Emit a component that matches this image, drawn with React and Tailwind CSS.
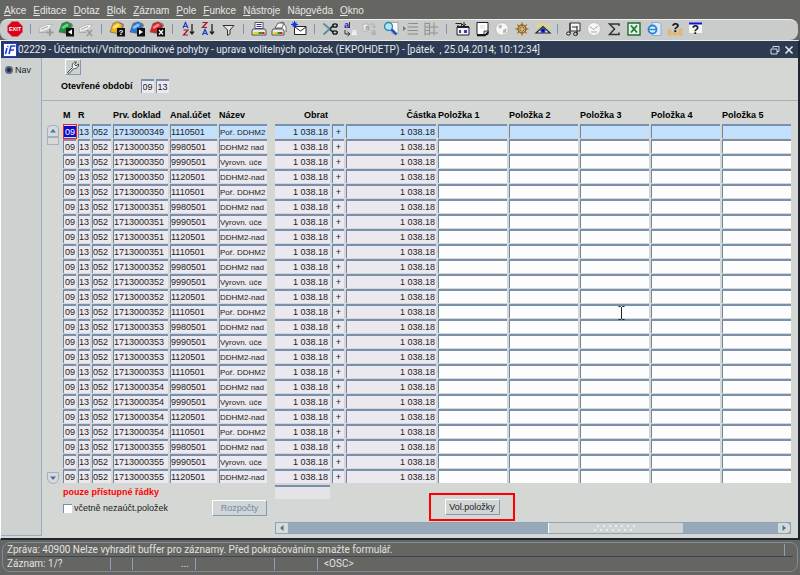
import { useState } from "react";
import clsx from "clsx";

const MENU = [
  ["", "A", "kce"],
  ["", "E", "ditace"],
  ["", "D", "otaz"],
  ["", "B", "lok"],
  ["", "Z", "áznam"],
  ["", "P", "ole"],
  ["", "F", "unkce"],
  ["", "N", "ástroje"],
  ["Náp", "o", "věda"],
  ["", "O", "kno"],
];

const ACCOUNTS = [
  ["9980501", "DDHM2 nad"],
  ["9990501", "Vyrovn. úče"],
  ["1120501", "DDHM2-nad"],
  ["1110501", "Poř. DDHM2"],
];

const ROWS = [{ doklad: "1713000349", ucet: "1110501", nazev: "Poř. DDHM2" }];
for (let i = 0; i < 23; i++) {
  const [ucet, nazev] = ACCOUNTS[i % 4];
  ROWS.push({ doklad: String(1713000350 + Math.floor(i / 4)), ucet, nazev });
}

const POLOZKY = [1, 2, 3, 4, 5];

const Folder = ({ color, light, children }) => (
  <>
    <path d="M1 11 4 2.500 9 .800 14 3 11 13Z" fill={color} stroke="#555" strokeWidth=".6" />
    <path d="M3.500 6 9 2.500 11 4.500 5 8Z" fill={light} />
    <path d="M10.500 2 14.500 4 13.500 7" fill="none" stroke="#777" />
    <rect x="8" y="7" width="8" height="8.500" fill="#111" />
    {children}
  </>
);

const Printer = () => (
  <>
    <path d="M4 1.500h8v6H4z" fill="#fff" stroke="#333" strokeWidth=".8" />
    <path d="M5.500 3.500h5M5.500 5.500h5" stroke="#2233bb" />
    <path d="M2 8h12l1 2v4H1v-4z" fill="#e8e8e8" stroke="#333" strokeWidth=".8" />
    <path d="M2.500 12h5" stroke="#e8d800" strokeWidth="2" />
    <path d="M7.500 12h3" stroke="#1a9a30" strokeWidth="2" />
    <path d="M10.500 12h3" stroke="#d22" strokeWidth="2" />
  </>
);

const GreySheet = () => (
  <>
    <path d="M1 7 9 3.500h5.500l-4 5-8.500 3z" fill="#f0f0f0" stroke="#b0b0b0" strokeWidth=".8" />
    <path d="M1 11.500h7.500M3 8.500l7-3" stroke="#aaa" strokeWidth="1.200" />
  </>
);

const iconText = { fontFamily: "Liberation Sans", fontWeight: 700 };

const ICONS = {
  "Konec": (
    <>
      <path d="M5 .500h6L15.500 5v6L11 15.500H5L.500 11V5z" fill="#d9001b" stroke="#f06070" strokeWidth=".6" />
      <text x="8" y="10" fontSize="5.500" fill="#fff" textAnchor="middle" style={iconText}>EXIT</text>
    </>
  ),
  "Vložit záznam": (
    <>
      <GreySheet />
      <path d="M12 8v7M8.500 11.500h7" stroke="#999" strokeWidth="1.800" />
    </>
  ),
  "Uložit": (
    <Folder color="#18943c" light="#6fd08a">
      <path d="M14 8.500v5L10 11z" fill="#fff" />
    </Folder>
  ),
  "Smazat záznam": (
    <>
      <GreySheet />
      <path d="m9 9 5 6m0-6-5 6" stroke="#999" strokeWidth="1.500" />
    </>
  ),
  "Zadat dotaz": (
    <Folder color="#f0b414" light="#ffe680">
      <text x="12" y="14" fontSize="8" fill="#fff" textAnchor="middle" style={iconText}>?</text>
    </Folder>
  ),
  "Provést dotaz": (
    <Folder color="#2c78d8" light="#8cc4ff">
      <path d="M10 8.500v5l4-2.500z" fill="#fff" />
    </Folder>
  ),
  "Zrušit dotaz": (
    <Folder color="#d8232a" light="#ff8a80">
      <path d="m10 9 4 4.500m0-4.500-4 4.500" stroke="#fff" strokeWidth="1.300" />
    </Folder>
  ),
  "Třídit vzestupně": (
    <>
      <path d="m3 7 2.500-5.500L8 7M4 5.500h3" fill="none" stroke="#2438c0" strokeWidth="1.200" />
      <path d="M3.500 9H8l-4.500 5H8" fill="none" stroke="#a01828" strokeWidth="1.200" />
      <path d="M12 3v9m-2-1.500 2 2.500 2-2.500" fill="none" stroke="#222" strokeWidth="1.300" />
    </>
  ),
  "Třídit sestupně": (
    <>
      <path d="M2.500 1.500H7l-4.500 5H7" fill="none" stroke="#a01828" strokeWidth="1.200" />
      <path d="m2.500 14 2.500-5.500L7.500 14M3.500 12.500h3" fill="none" stroke="#2438c0" strokeWidth="1.200" />
      <path d="M12 3v9m-2-1.500 2 2.500 2-2.500" fill="none" stroke="#222" strokeWidth="1.300" />
    </>
  ),
  "Filtr": <path d="M3 4.500h11L10 9v4l-2.500 1.500V9z" fill="#e4e4e4" stroke="#333" strokeWidth="1" />,
  "Tisk": <Printer />,
  "Tisk sestavy": (
    <>
      <path d="m7 3 5-2 3 5v5" fill="#fff" stroke="#555" strokeWidth=".8" />
      <path d="m4 7 3-5h6l-2 5z" fill="#f4f4f4" stroke="#444" strokeWidth=".8" />
      <path d="M2 8h10l1 2v4H1v-4z" fill="#e8e8e8" stroke="#333" strokeWidth=".8" />
      <path d="M2.500 12h4" stroke="#e8d800" strokeWidth="2" />
      <path d="M6.500 12h2.500" stroke="#1a9a30" strokeWidth="2" />
      <path d="M9 12h2.500" stroke="#d22" strokeWidth="2" />
    </>
  ),
  "Pošta": (
    <>
      <path d="M3.500 5.500h11.500v8H3.500z" fill="#fff" stroke="#222" />
      <path d="m4 6 5.500 4L15 6" fill="none" stroke="#222" />
      <path d="M3.500 0v7M0 3.500h7M1.500 1.500l4 4m0-4-4 4" stroke="#1538d8" strokeWidth="1.100" />
    </>
  ),
  "Vyjmout": (
    <>
      <path d="M1.500 2.500 11 11M1.500 13.500 11 5" stroke="#5b8f96" strokeWidth="1.800" />
      <path d="m8 8.500 3 2.500M8 7.500 11 5" stroke="#222" strokeWidth="1.500" />
      <ellipse cx="13" cy="4.500" rx="2.200" ry="1.600" fill="none" stroke="#111" strokeWidth="1.400" />
      <ellipse cx="13" cy="11.500" rx="2.200" ry="1.600" fill="none" stroke="#111" strokeWidth="1.400" />
    </>
  ),
  "Kopírovat": (
    <>
      <text x="2" y="7" fontSize="9" fill="#2020c8" style={iconText}>a</text>
      <path d="M3 9v4h4m-1.500-2L8 13l-2.500 2M7.500 1v6" fill="none" stroke="#333" />
      <text x="9.500" y="14" fontSize="9" fill="#fff" style={iconText}>a</text>
    </>
  ),
  "Vložit": (
    <>
      <path d="M1 3h5v7H1z" fill="#ededed" stroke="#b4b4b4" />
      <text x="3" y="9" fontSize="8" fill="#a4a4a4" style={iconText}>a</text>
      <path d="M7 3h5v3m-2-1 2 2 2-2" fill="none" stroke="#b0b0b0" />
      <text x="9" y="14" fontSize="9" fill="#aaa" style={iconText}>a</text>
    </>
  ),
  "Hledat": (
    <>
      <path d="M8 1.500h7v11H9z" fill="#f8f8f8" stroke="#999" strokeWidth=".8" />
      <circle cx="5.500" cy="5.500" r="4" fill="#aee6f4" stroke="#3a86a8" strokeWidth="1.300" />
      <path d="m8.500 8.500 5 5" stroke="#1f58b8" strokeWidth="2.600" />
    </>
  ),
  "Seznam": (
    <>
      <path d="M5 2.500h10M5 6h10M5 9.500h10M5 13h10" stroke="#8a8a8a" strokeWidth="1.200" />
      <path d="M0 5v5l3-2.500z" fill="#777" />
      <path d="M5 1v14" stroke="#bbb" />
    </>
  ),
  "Strom": (
    <path
      d="M2 1.500v13M6.500 1.500v13M11 1.500v13M2 2.500h4M2 6h4M2 9.500h4M2 13h4M7 6h8M7 12h8"
      stroke="#8f8f8f"
    />
  ),
  "Kalendář": (
    <>
      <path d="M1.500 2.500h6v4M4 4v3h8" fill="none" stroke="#222" />
      <path d="M3 6h12v8H3z" fill="#f2f2f2" stroke="#222" />
      <path d="M3 6h12" stroke="#222" strokeWidth="2" />
      <path d="M10 1v4m-2-2 2 2 2-2" fill="none" stroke="#222" />
      <path d="M5 9h2v3H5zM10 9h3v3h-3z" fill="#3344bb" />
    </>
  ),
  "Poznámka": (
    <>
      <path d="M3 1.500h11v12H3z" fill="#fff" stroke="#222" />
      <path d="M3 14.500h8l3.500-4" fill="none" stroke="#111" strokeWidth="1.500" />
      <path d="M10 13.500V10h4" fill="#ccc" stroke="#222" strokeWidth=".8" />
      <path d="M6 7h5M6 5h5" stroke="#ddd" />
    </>
  ),
  "Síť": (
    <>
      <circle cx="8" cy="8" r="6.300" fill="#f6f6f6" stroke="#bdbdbd" />
      <path d="m4 5 3-1.500L8 6 6 8zM9 9l3.500-1.500L12 11l-2.500 2z" fill="#b4b4b4" />
    </>
  ),
  "Navigátor": (
    <>
      <circle cx="8" cy="8" r="4" fill="none" stroke="#a06c14" strokeWidth="1.400" />
      <path d="M8 1.500v13M1.500 8h13M3 3.500l10 9M13 3.500l-10 9" stroke="#8a5a10" />
      <circle cx="8" cy="8" r="1.500" fill="#e8c060" />
    </>
  ),
  "Náhled": (
    <>
      <path d="m1 4 3 3M8 1.500V5m7-1-3 3M4 2.500l2 3m6-3-2 3" stroke="#f0e040" strokeWidth="1.200" />
      <path d="M1 12 8 5.500 15 12z" fill="#f5f0e0" stroke="#222" strokeWidth="1.200" />
      <circle cx="8" cy="9.500" r="2.600" fill="#1c38e0" />
      <circle cx="8" cy="9.500" r="1" fill="#001" />
    </>
  ),
  "Média": (
    <>
      <path d="M5 2h10v8H5z" fill="#f4f4f4" stroke="#333" />
      <path d="M5 2v10M12 5v8M7 6h5" stroke="#333" strokeWidth="1.200" />
      <ellipse cx="3.500" cy="12.500" rx="2" ry="1.600" fill="none" stroke="#222" />
      <ellipse cx="10.500" cy="13" rx="2" ry="1.600" fill="none" stroke="#222" />
    </>
  ),
  "Čas": (
    <>
      <circle cx="8" cy="8" r="6.500" fill="#f6f6f6" stroke="#c2c2c2" />
      <path d="m4 5.500 3.500 3L12 5M5 11h6" fill="none" stroke="#aaa" />
    </>
  ),
  "Součet": <path d="M13 5V3H3.500l5 5-5 5.500H13V11.500" fill="none" stroke="#333" strokeWidth="1.500" />,
  "Excel": (
    <>
      <path d="M2 2h12v12H2z" fill="#e6f2e6" stroke="#1e6e34" strokeWidth="1.400" />
      <path d="m5 4.500 6 7m0-7-6 7" stroke="#1e7a38" strokeWidth="1.800" />
    </>
  ),
  "Prohlížeč": (
    <>
      <path d="M6 1.500h7l2 2v11H6z" fill="#dfe9fa" stroke="#8a9cc8" strokeWidth=".8" />
      <circle cx="6.500" cy="8.500" r="4" fill="#d4eeff" stroke="#2b86d0" strokeWidth="1.800" />
      <path d="M3 8.500h7" stroke="#2b86d0" strokeWidth="1.400" />
    </>
  ),
  "Nápověda k poli": (
    <>
      <path d="M1 9h3v5H1zM6 11h4v3H6zM12 8h3v6h-3z" fill="#f0b860" stroke="#e0a850" strokeWidth=".5" />
      <text x="8.500" y="11" fontSize="13" fill="#111" textAnchor="middle" style={iconText}>?</text>
    </>
  ),
  "Nápověda": (
    <>
      <path d="M2 2h13v10H2z" fill="#f4f4f4" />
      <path d="M2 2.500h13" stroke="#1212e0" strokeWidth="2" />
      <text x="8.500" y="13" fontSize="12" fill="#111" textAnchor="middle" style={iconText}>?</text>
    </>
  ),
};

const TOOLBAR = [
  "Konec", "|", "Vložit záznam", "Uložit", "Smazat záznam", "|",
  "Zadat dotaz", "Provést dotaz", "Zrušit dotaz", "|",
  "Třídit vzestupně", "Třídit sestupně", "Filtr", "|",
  "Tisk", "Tisk sestavy", "Pošta", "|",
  "Vyjmout", "Kopírovat", "Vložit", "Hledat", "Seznam", "Strom", "|",
  "Kalendář", "Poznámka", "Síť", "Navigátor", "Náhled", "|",
  "Média", "Čas", "Součet", "Excel", "Prohlížeč", "Nápověda k poli", "Nápověda",
];

const MenuBar = () => (
  <nav className="flex h-[19px] items-center gap-[7px] px-1 pt-px text-[10px] text-[#e6e6e6]">
    {MENU.map(([pre, key, post]) => (
      <button key={pre + key + post} type="button">
        {pre}
        <span className="underline">{key}</span>
        {post}
      </button>
    ))}
  </nav>
);

const Toolbar = () => (
  <div className="mr-0.5 h-[21px] rounded-lg border-t border-[#eef0ee] bg-[#c9cccb] pb-0.5 pl-1.5">
    <div className="flex h-full w-[698px] items-center justify-between">
      {TOOLBAR.map((name, i) =>
        name === "|" ? (
          <span key={i} className="flex w-2 justify-center">
            <span className="h-2.5 w-px bg-[#7d94b3]" />
          </span>
        ) : (
          <button key={i} type="button" aria-label={name} className="flex w-[18px] justify-center">
            <svg viewBox="0 0 16 16" className="size-4 overflow-visible">{ICONS[name]}</svg>
          </button>
        )
      )}
    </div>
  </div>
);

const TitleBar = () => (
  <header className="flex h-[17px] items-center bg-[#2c3a52] pl-0.5 pr-1 text-[#e4e8ee]">
    <svg viewBox="0 0 14 14" className="mr-px size-3.5">
      <rect x=".500" y=".500" width="13" height="13" fill="#fff" stroke="#1a3be0" />
      <path d="M4 5 2.500 11M5 3l-.3 1M6 11 8 3h4.500M7 7h4" fill="none" stroke="#1a3be0" strokeWidth="1.600" />
    </svg>
    <h1 className="grow whitespace-pre font-[Roboto,sans-serif] text-[10px]">
      02229 - Účetnictví/Vnitropodnikové pohyby - uprava volitelných položek (EKPOHDETP) - [pátek  , 25.04.2014; 10:12:34]
    </h1>
    <button type="button" aria-label="Obnovit" className="mr-1">
      <svg viewBox="0 0 10 10" className="size-2.5">
        <path d="M3 3V1.500h6v5H7M1 4h6v5H1z" fill="none" stroke="#d8dce4" />
      </svg>
    </button>
    <button type="button" aria-label="Zavřít">
      <svg viewBox="0 0 10 10" className="size-2.5">
        <path d="m1.500 1.500 7 7m0-7-7 7" stroke="#e8ecf2" strokeWidth="1.500" />
      </svg>
    </button>
  </header>
);

const Field = ({ label, value = "", className }) => (
  <input
    type="text"
    aria-label={label}
    defaultValue={value}
    className={clsx(
      "block h-3.5 w-full border-t-2 border-l border-t-[#7890ae] border-l-[#6c86a8] leading-3 text-[#222] outline-none",
      className
    )}
  />
);

const th = "h-[18px] p-0 text-left align-middle font-bold whitespace-nowrap";
const td = "h-[15px] p-0 pr-0.5 align-top";

const RecordTable = () => (
  <table className="w-full table-fixed border-collapse text-[9px] leading-3">
    <colgroup>
      <col className="w-[15px]" />
      <col className="w-[14px]" />
      <col className="w-[21px]" />
      <col className="w-[57px]" />
      <col className="w-[49px]" />
      <col className="w-[50px]" />
      <col className="w-[6px]" />
      <col className="w-[57px]" />
      <col className="w-[14px]" />
      <col className="w-[92px]" />
      {POLOZKY.map((n) => (
        <col key={n} />
      ))}
    </colgroup>
    <thead>
      <tr>
        <th className={th}>M</th>
        <th className={th}>R</th>
        <th className={th}></th>
        <th className={th}>Prv. doklad</th>
        <th className={th}>Anal.účet</th>
        <th className={th}>Název</th>
        <th className={th}></th>
        <th className={clsx(th, "pr-1 text-right!")}>Obrat</th>
        <th className={th}></th>
        <th className={clsx(th, "pr-0.5 text-right!")}>Částka</th>
        {POLOZKY.map((n) => (
          <th key={n} className={th}>Položka {n}</th>
        ))}
      </tr>
    </thead>
    <tbody>
      {ROWS.map((row, i) => {
        const bg = i === 0 ? "bg-[#c3e0fd]" : "bg-[#ebe9ef]";
        return (
          <tr key={i}>
            <td className={td}>
              {i === 0 ? (
                <div className="-mr-px border border-[#f02020] bg-[#c3e0fd] py-px">
                  <input
                    type="text"
                    aria-label="M"
                    defaultValue="09"
                    className="block h-[11px] w-full bg-[#0a0ad0] pl-px leading-none text-white outline-none"
                  />
                </div>
              ) : (
                <Field label="M" value="09" className={clsx(bg, "pl-px")} />
              )}
            </td>
            <td className={td}><Field label="R" value="13" className={bg} /></td>
            <td className={td}><Field label="Kód" value="052" className={bg} /></td>
            <td className={td}><Field label="Prv. doklad" value={row.doklad} className={bg} /></td>
            <td className={td}><Field label="Anal.účet" value={row.ucet} className={bg} /></td>
            <td className={td}><Field label="Název" value={row.nazev} className={clsx(bg, "text-[8px]")} /></td>
            <td className={td}></td>
            <td className={td}>
              <Field label="Obrat" value="1 038.18" className={clsx(bg, "border-l-0 pr-0.5 text-right")} />
            </td>
            <td className={td}><Field label="Znaménko" value="+" className={clsx(bg, "text-center")} /></td>
            <td className={td}>
              <Field label="Částka" value="1 038.18" className={clsx(bg, "pr-px text-right")} />
            </td>
            {POLOZKY.map((n) => (
              <td key={n} className={td}>
                <Field label={`Položka ${n}`} className={i === 0 ? bg : "bg-[#fdfdfd]"} />
              </td>
            ))}
          </tr>
        );
      })}
    </tbody>
  </table>
);

const TextCursor = () => (
  <svg viewBox="0 0 7 14" className="pointer-events-none absolute top-[200px] left-[76%] h-3.5 w-[7px]">
    <path d="M.500 .500h2l1 1 1-1h2M3.500 1.500v11M.500 13.500h2l1-1 1 1h2" fill="none" stroke="#222" />
  </svg>
);

const ArrowButton = ({ label, d, className }) => (
  <button
    type="button"
    aria-label={label}
    className={clsx("flex items-center justify-center border border-[#9fb0c2] bg-[#d6dad9]", className)}
  >
    <svg viewBox="0 0 8 8" className="size-2">
      <path d={d} fill="#4f6f9a" />
    </svg>
  </button>
);

const HScroll = () => (
  <div className="flex h-3 border border-[#8ea3b8] bg-[#97a8b8]">
    <ArrowButton label="Posunout vlevo" d="M5.500 1v6L2 4z" className="w-3 border-0" />
    <div className="flex grow">
      <div className="w-[53%]" />
      <div className="flex w-[27.6%] items-center justify-center border-l border-white bg-[#ced3d2]">
        <svg viewBox="0 0 48 8" className="h-2 w-12">
          <path d="M5 2h42" stroke="#f4f4f4" strokeWidth="1.500" strokeDasharray="2 4" />
          <path d="M2 6h42" stroke="#f4f4f4" strokeWidth="1.500" strokeDasharray="2 4" />
        </svg>
      </div>
    </div>
    <ArrowButton label="Posunout vpravo" d="M2.500 1v6L6 4z" className="w-3 rounded-r border-0" />
  </div>
);

const formButton =
  "h-4 border border-t-white border-l-white border-r-[#8499b3] border-b-[#8499b3] bg-[#d0d5d5] leading-3";

const FormFooter = () => {
  const [nezauct, setNezauct] = useState(false);

  return (
    <div className="flex h-[38px] gap-1.5 pl-[21px] text-[9px] leading-3">
      <div className="w-[206px]">
        <p className="h-4 pt-0.5 font-bold text-[#ff0000]">pouze přístupné řádky</p>
        <div className="flex items-center justify-between pr-0.5">
          <label className="flex items-center gap-0.5 text-[#222]">
            <input
              type="checkbox"
              checked={nezauct}
              onChange={(e) => setNezauct(e.target.checked)}
              className="size-[9px] appearance-none border-t border-l border-[#7890ae] bg-white checked:bg-[#2c3a52]"
            />
            včetně nezaúčt.položek
          </label>
          <button type="button" disabled className={clsx(formButton, "w-[55px] text-[#7389a8]")}>
            Rozpočty
          </button>
        </div>
      </div>
      <div className="w-[55px] pt-px">
        <Field label="Obrat celkem" className="border-l-0 bg-[#e4e3e8]" />
      </div>
      <div className="mt-[9px] ml-[93px] flex h-7 w-[86px] items-center justify-center border-2 border-[#ff0000]">
        <button type="button" className={clsx(formButton, "w-[55px] text-[#222]")}>
          Vol.položky
        </button>
      </div>
    </div>
  );
};

const StatusBar = () => (
  <footer className="m-0.5 rounded-lg border border-[#7f8b9b] font-[Roboto,sans-serif] text-[10px] leading-3 text-[#e2e2e2]">
    <div className="mx-1 flex h-3.5 items-center border-b border-[#3c4756] pr-2">
      <p className="grow">Zpráva: 40900 Nelze vyhradit buffer pro záznamy. Před pokračováním smažte formulář.</p>
      <span className="h-3 w-px bg-[#8ba0bc]" />
    </div>
    <div className="mx-1 flex h-3.5 items-center">
      <span className="w-[103px]">Záznam: 1/?</span>
      <span className="h-3 w-[22px] border-l border-[#8ba0bc]" />
      <span className="h-3 w-[63px] border-l border-[#8ba0bc] pr-1.5 text-right">...</span>
      <span className="h-3 w-[79px] border-l border-[#8ba0bc]" />
      <span className="h-3 w-[43px] border-l border-[#8ba0bc]" />
      <span className="h-3 border-l border-[#8ba0bc] pl-1.5">&lt;OSC&gt;</span>
    </div>
  </footer>
);

const PeriodInput = (props) => (
  <input
    type="text"
    className="h-3.5 w-[13px] border-t-2 border-l border-[#7890ae] bg-[#ebe9ef] pl-px text-[#222] outline-none"
    {...props}
  />
);

const App = () => (
  <div className="min-h-screen bg-[#656661] font-['Liberation_Sans',sans-serif]">
    <MenuBar />
    <Toolbar />
    <div className="border-r-2 border-b-2 border-l border-t border-[#1f2630] border-t-[#e8eae8] border-l-white bg-[#d4d7d4]">
      <TitleBar />
      <div className="flex">
        <aside className="mb-0.5 w-[41px] shrink-0 border-r border-b border-[#9aabc2] bg-[#cdd1d0] pl-1 pt-1.5">
          <label className="flex items-center gap-0.5 text-[9px] leading-3 text-[#222]">
            <input
              type="radio"
              name="nav"
              defaultChecked
              className="size-2 appearance-none rounded-full border border-[#55677f] bg-white checked:border-2 checked:bg-[#1c2a40]"
            />
            Nav
          </label>
        </aside>
        <main className="min-w-0 grow pb-1">
          <div className="h-[43px] border-b border-[#a3afbf] pl-[19px] pt-px">
            <button
              type="button"
              aria-label="Nastavení"
              className="ml-1 flex size-4 items-center justify-center border border-t-white border-l-white border-r-[#8499b3] border-b-[#8499b3] bg-[#ccd1d1]"
            >
              <svg viewBox="0 0 14 14" className="size-3.5">
                <path
                  d="M1.500 12.500 6.500 7.500C5.500 4.500 7.500 1.500 10.500 2L8.500 4.500 10 6 12.500 4C13 7 10.500 9 7.700 8.600L3 13.500Z"
                  fill="#f2f2f2"
                  stroke="#444"
                />
              </svg>
            </button>
            <div className="mt-1 flex items-center text-[9px] leading-3">
              <label htmlFor="mesic" className="mr-2 font-bold">Otevřené období</label>
              <div className="flex gap-0.5">
                <PeriodInput id="mesic" defaultValue="09" />
                <PeriodInput aria-label="Rok" defaultValue="13" />
              </div>
            </div>
          </div>
          <div className="flex pt-[5px] pr-[5px]">
            <div className="flex w-[21px] shrink-0 flex-col items-start pl-[5px] pt-[19px]">
              <ArrowButton label="Předchozí záznam" d="M1 5.500h6L4 2z" className="h-3 w-3 rounded-t" />
              <div className="h-2 w-3 border border-[#9fb0c2] bg-[#d6dad9]" />
              <div className="grow" />
              <ArrowButton label="Další záznam" d="M1 2.500h6L4 6z" className="h-3 w-3 rounded-b-full" />
            </div>
            <div className="relative min-w-0 grow">
              <RecordTable />
              <TextCursor />
            </div>
          </div>
          <FormFooter />
          <div className="pr-[7px] pl-[233px]">
            <HScroll />
          </div>
        </main>
      </div>
    </div>
    <StatusBar />
  </div>
);

export default App;
